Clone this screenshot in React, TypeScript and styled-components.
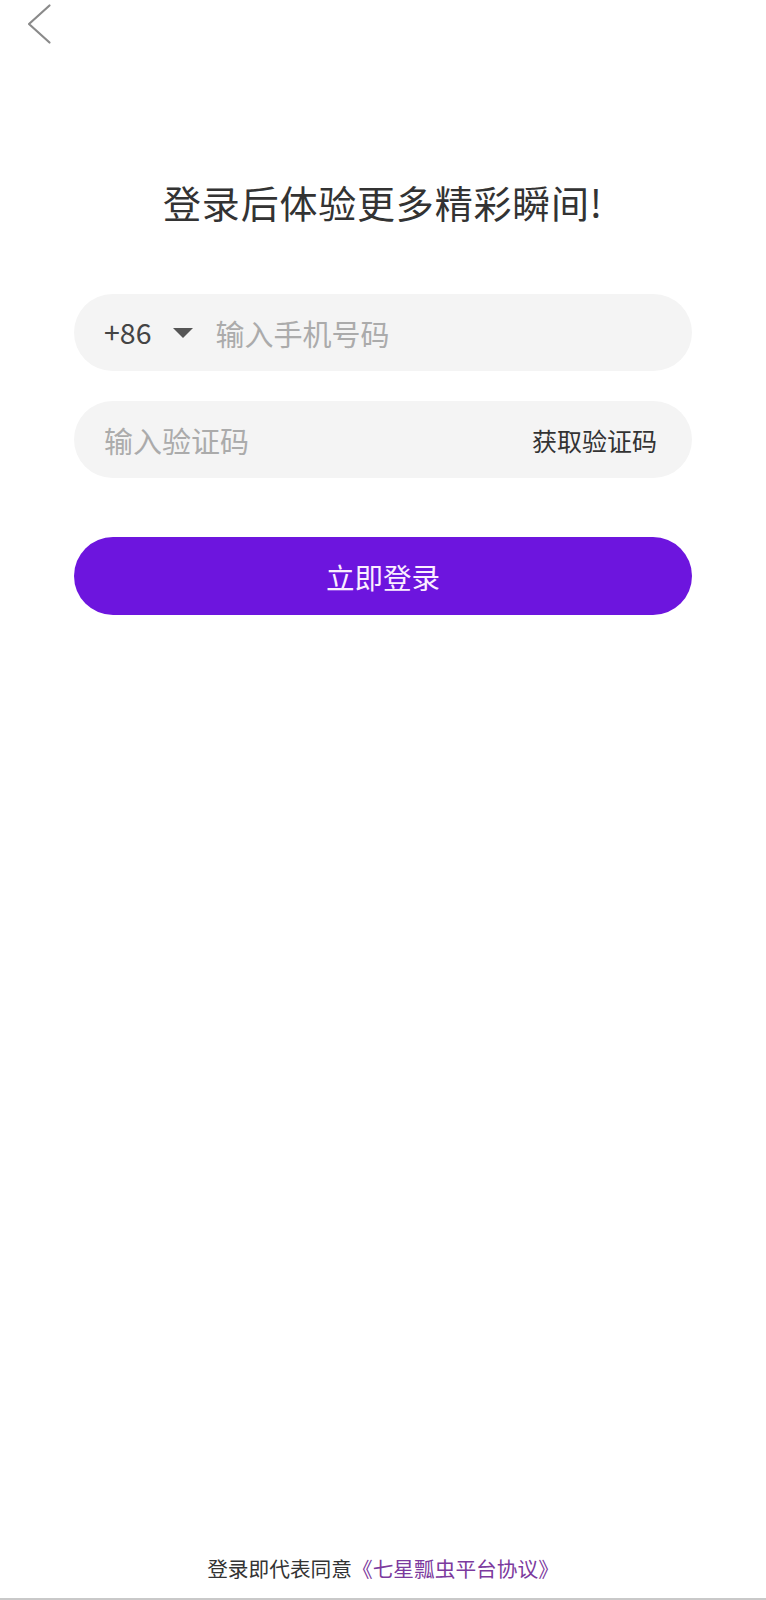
import React from "react";
import styled, { createGlobalStyle } from "styled-components";

const Global = createGlobalStyle`
  html, body { margin: 0; padding: 0; background: #ffffff; }
  * { box-sizing: border-box; }
  body { font-family: "Noto Sans CJK SC", "Noto Sans", sans-serif; }
`;

const Page = styled.div`
  width: 766px;
  min-height: 1600px;
  display: flex;
  flex-direction: column;
  background: #ffffff;
  border-bottom: 2px solid #c9c9c9;
`;

const Header = styled.div`
  height: 48px;
  display: flex;
  align-items: flex-start;
`;

const BackButton = styled.button`
  border: none;
  background: transparent;
  padding: 0;
  margin: 3px 0 0 26px;
  width: 26px;
  height: 42px;
  display: flex;
  cursor: pointer;
`;

const Title = styled.h1`
  margin: 133px 0 0;
  font-size: 38px;
  line-height: 42px;
  letter-spacing: 0.8px;
  font-weight: 400;
  color: #333333;
  text-align: center;
`;

const Form = styled.div`
  margin: 71px 74px 0;
  display: flex;
  flex-direction: column;
`;

const Field = styled.div<{ $gap?: number }>`
  height: 77px;
  border-radius: 39px;
  background: #f4f4f4;
  display: flex;
  align-items: center;
  padding: 0 35px 0 30px;
  margin-top: ${(p) => p.$gap ?? 0}px;
`;

const Prefix = styled.span`
  font-size: 28.5px;
  color: #444444;
  line-height: 1;
`;

const Caret = styled.span`
  width: 0;
  height: 0;
  margin: 0 22px 0 22px;
  border-left: 10px solid transparent;
  border-right: 10px solid transparent;
  border-top: 10px solid #555555;
`;

const TextInput = styled.input`
  flex: 1;
  min-width: 0;
  border: none;
  outline: none;
  background: transparent;
  font-family: inherit;
  font-size: 29px;
  color: #333333;
  padding: 0;
  &::placeholder { color: #ababab; }
`;

const CodeLink = styled.span`
  font-size: 25px;
  color: #333333;
  white-space: nowrap;
`;

const SubmitButton = styled.button`
  margin-top: 59px;
  height: 78px;
  border: none;
  border-radius: 39px;
  background: #6d15de;
  color: #fbeeff;
  font-family: inherit;
  font-size: 28.5px;
  cursor: pointer;
`;

const Spacer = styled.div`
  flex: 1;
`;

const Footer = styled.p`
  margin: 0 0 18px;
  text-align: center;
  font-size: 20.7px;
  line-height: 24px;
  color: #333333;
`;

const Agreement = styled.span`
  color: #7c3a9e;
`;

export default function App() {
  return (
    <>
      <Global />
      <Page>
        <Header>
          <BackButton aria-label="返回">
            <svg width="26" height="42" viewBox="0 0 26 42">
              <path d="M23.5 2.5 L3 21 L23.5 39.5" fill="none" stroke="#8a8a8a" strokeWidth="2.2" strokeLinecap="round" strokeLinejoin="round" />
            </svg>
          </BackButton>
        </Header>
        <Title>登录后体验更多精彩瞬间!</Title>
        <Form>
          <Field>
            <Prefix>+86</Prefix>
            <Caret />
            <TextInput placeholder="输入手机号码" />
          </Field>
          <Field $gap={30}>
            <TextInput placeholder="输入验证码" />
            <CodeLink>获取验证码</CodeLink>
          </Field>
          <SubmitButton>立即登录</SubmitButton>
        </Form>
        <Spacer />
        <Footer>
          登录即代表同意<Agreement>《七星瓢虫平台协议》</Agreement>
        </Footer>
      </Page>
    </>
  );
}
